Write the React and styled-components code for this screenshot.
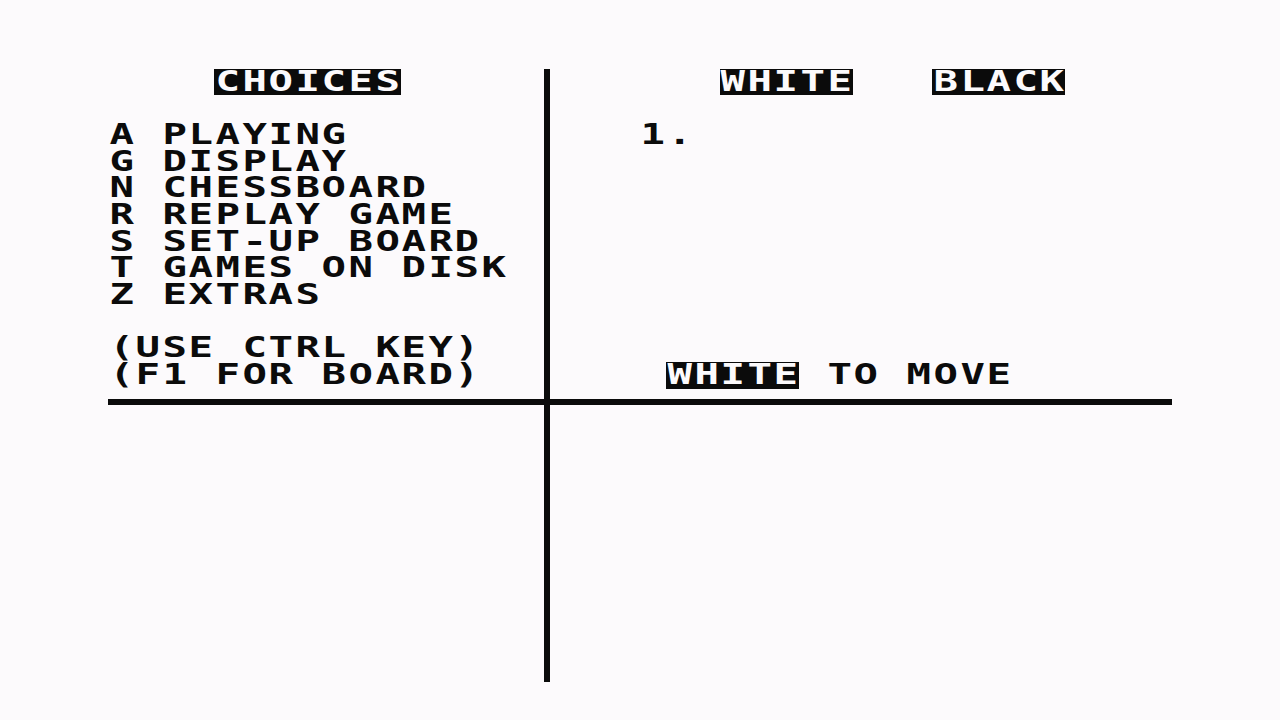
import React from "react";
import styled, { createGlobalStyle } from "styled-components";

// one C64 character cell, as it is scaled on this screen
const CELL_W = 26.6;
const CELL_H = 26.67;
const INK = "#0b0b0b";
const PAPER = "#fcfafc";

const MENU = [
	["A", "PLAYING"],
	["G", "DISPLAY"],
	["N", "CHESSBOARD"],
	["R", "REPLAY GAME"],
	["S", "SET-UP BOARD"],
	["T", "GAMES ON DISK"],
	["Z", "EXTRAS"],
];

function Text({ row, col, inverse, children }) {
	const chars = [...children];
	return (
		<Run $row={row} $col={col} $len={chars.length}>
			{chars.map((c, i) => (
				<Char key={i} $inverse={inverse}>
					<Glyph>{c}</Glyph>
				</Char>
			))}
		</Run>
	);
}

export default function App() {
	return (
		<>
			<GlobalStyle />
			<Screen>
				<Text row={1} col={4} inverse>
					CHOICES
				</Text>
				<Text row={1} col={23} inverse>
					WHITE
				</Text>
				<Text row={1} col={31} inverse>
					BLACK
				</Text>

				{MENU.map(([key, label], i) => (
					<Text key={key} row={3 + i} col={0}>
						{`${key} ${label}`}
					</Text>
				))}

				<Text row={3} col={20}>
					1.
				</Text>

				<Text row={11} col={0}>
					(USE CTRL KEY)
				</Text>
				<Text row={12} col={0}>
					(F1 FOR BOARD)
				</Text>

				<Text row={12} col={21} inverse>
					WHITE
				</Text>
				<Text row={12} col={27}>
					TO MOVE
				</Text>

				<Rule $row={13} />
				<Rule $vertical $col={16} $from={1} $to={23} />
			</Screen>
		</>
	);
}

const GlobalStyle = createGlobalStyle`
	html, body {
		margin: 0;
		padding: 0;
		background: ${PAPER};
	}

	body {
		width: 1280px;
		height: 720px;
		overflow: hidden;
	}
`;

const Screen = styled.main`
	display: grid;
	grid-template-columns: repeat(40, ${CELL_W}px);
	grid-template-rows: repeat(25, ${CELL_H}px);
	width: ${40 * CELL_W}px;
	margin: 42px auto 0;
	color: ${INK};
	font-family: "DejaVu Sans Mono", "Liberation Mono", monospace;
	font-weight: bold;
	font-size: 29px;
	line-height: ${CELL_H}px;
`;

const Run = styled.div`
	grid-column: ${({ $col, $len }) => `${$col + 1} / span ${$len}`};
	grid-row: ${({ $row }) => $row + 1};
	display: flex;
	white-space: pre;
`;

const Char = styled.span`
	display: flex;
	justify-content: center;
	flex: 0 0 ${CELL_W}px;
	height: ${CELL_H}px;
	background: ${({ $inverse }) => ($inverse ? INK : "transparent")};
	color: ${({ $inverse }) => ($inverse ? PAPER : "inherit")};
`;

const Glyph = styled.span`
	display: block;
	transform: translateY(-1px) scaleX(1.4);
`;

const Rule = styled.div`
	background: ${INK};
	${({ $vertical, $col, $from, $to, $row }) =>
		$vertical
			? `
		grid-column: ${$col + 1};
		grid-row: ${$from + 1} / ${$to + 2};
		justify-self: center;
		width: 6px;
	`
			: `
		grid-column: 1 / -1;
		grid-row: ${$row + 1};
		align-self: center;
		height: 6px;
	`}
`;
